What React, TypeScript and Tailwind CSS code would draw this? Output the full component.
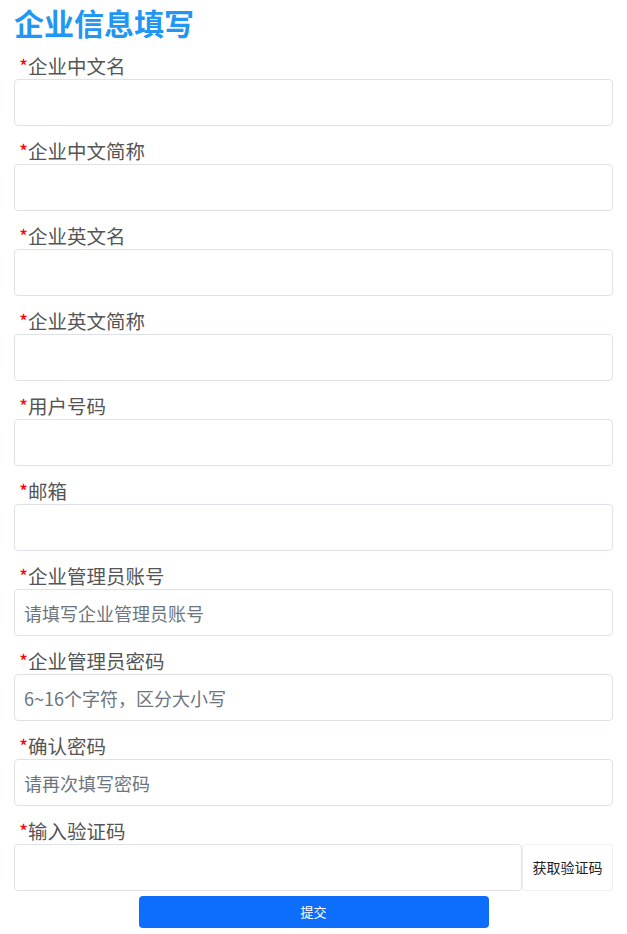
import * as React from 'react';

const fields = [
  { label: '企业中文名', placeholder: '' },
  { label: '企业中文简称', placeholder: '' },
  { label: '企业英文名', placeholder: '' },
  { label: '企业英文简称', placeholder: '' },
  { label: '用户号码', placeholder: '' },
  { label: '邮箱', placeholder: '' },
  { label: '企业管理员账号', placeholder: '请填写企业管理员账号' },
  { label: '企业管理员密码', placeholder: '6~16个字符，区分大小写' },
  { label: '确认密码', placeholder: '请再次填写密码' },
];

const font = { fontFamily: '"Noto Sans CJK SC", "Noto Sans", sans-serif' };

function Label({ text }: { text: string }) {
  return (
    <label className="block pl-[5px] text-[19.5px] leading-[26px] text-[#555]">
      <span className="text-[#f00]">*</span>
      {text}
    </label>
  );
}

export default function App() {
  return (
    <div className="min-h-screen bg-white px-[14px]" style={font}>
      <h1 className="text-[30px] font-bold leading-[44px] text-[#2196f3]">企业信息填写</h1>

      <form className="mt-[9px] flex flex-col gap-[12px]" onSubmit={(e) => e.preventDefault()}>
        {fields.map((f) => (
          <div key={f.label}>
            <Label text={f.label} />
            <input
              className="block h-[47px] w-full rounded-[4px] border border-[#dee2e6] px-[9px] text-[18px] text-[#333] outline-none placeholder:text-[#6c757d]"
              placeholder={f.placeholder}
            />
          </div>
        ))}

        <div>
          <Label text="输入验证码" />
          <div className="flex">
            <input className="block h-[47px] min-w-0 flex-1 rounded-[4px] border border-[#dee2e6] px-[9px] text-[18px] outline-none" />
            <button
              type="button"
              className="h-[47px] w-[91px] rounded-[3px] border border-[#eef0f2] bg-white text-[14px] text-[#222]"
            >
              获取验证码
            </button>
          </div>
        </div>
      </form>

      <div className="mt-[5px] flex justify-center">
        <button className="h-[32px] w-[350px] rounded-[4px] bg-[#0d6efd] text-[13px] text-white">提交</button>
      </div>
    </div>
  );
}
